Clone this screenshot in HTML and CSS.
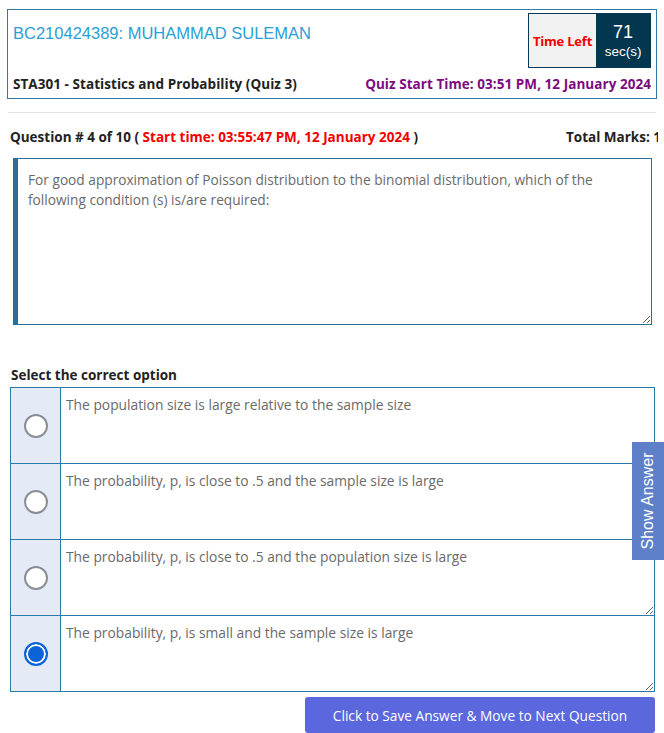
FILE: index.html
```html
<!DOCTYPE html>
<html>
<head>
<meta charset="utf-8">
<link rel="stylesheet" href="styles.css">
</head>
<body>
<div class="page">
  <div class="header">
    <div class="head-top">
      <div class="student">BC210424389: MUHAMMAD SULEMAN</div>
      <div class="timer">
        <div class="timer-label">Time Left</div>
        <div class="timer-value"><span class="secs">71</span><span class="unit">sec(s)</span></div>
      </div>
    </div>
    <div class="head-bottom">
      <div class="course">STA301 - Statistics and Probability (Quiz 3)</div>
      <div class="quiz-start">Quiz Start Time: 03:51 PM, 12 January 2024</div>
    </div>
  </div>
  <div class="rule"></div>
  <div class="qline">
    <div class="qnum">Question # 4 of 10 ( <span class="red">Start time: 03:55:47 PM, 12 January 2024</span> )</div>
    <div class="marks">Total Marks: 1</div>
  </div>
  <textarea class="question" readonly>For good approximation of Poisson distribution to the binomial distribution, which of the following condition (s) is/are required:</textarea>
  <div class="select-label">Select the correct option</div>
  <div class="options">
    <div class="opt">
      <div class="radio-cell"><span class="radio"></span></div>
      <textarea class="opt-text" readonly>The population size is large relative to the sample size</textarea>
    </div>
    <div class="opt">
      <div class="radio-cell"><span class="radio"></span></div>
      <textarea class="opt-text" readonly>The probability, p, is close to .5 and the sample size is large</textarea>
    </div>
    <div class="opt">
      <div class="radio-cell"><span class="radio"></span></div>
      <textarea class="opt-text" readonly>The probability, p, is close to .5 and the population size is large</textarea>
    </div>
    <div class="opt">
      <div class="radio-cell"><span class="radio checked"></span></div>
      <textarea class="opt-text" readonly>The probability, p, is small and the sample size is large</textarea>
    </div>
  </div>
  <div class="actions">
    <button class="save">Click to Save Answer &amp; Move to Next Question</button>
  </div>
</div>
<div class="show-answer"><span>Show Answer</span></div>
</body>
</html>
```
FILE: styles.css
```css
html, body {
  margin: 0;
  padding: 0;
  background: #fff;
  overflow: hidden;
}
body {
  font-family: "Open Sans", "Liberation Sans", sans-serif;
  width: 664px;
  height: 733px;
  position: relative;
}
.page {
  padding: 9px 7px 0 7px;
}
.header {
  border: 1px solid #2f79a3;
  height: 90px;
  box-sizing: border-box;
  padding: 3px 5px 0 5px;
  display: flex;
  flex-direction: column;
}
.head-top {
  display: flex;
  justify-content: space-between;
  align-items: flex-start;
}
.student {
  font-family: "Liberation Sans", Arial, sans-serif;
  color: #2aa0d6;
  font-size: 16.5px;
  margin-top: 11px;
}
.timer {
  display: flex;
  height: 55px;
  border: 1px solid #033a56;
  box-sizing: border-box;
}
.timer-label {
  width: 67px;
  background: #f2f2f2;
  color: #f20000;
  font-weight: 700;
  font-size: 13px;
  display: flex;
  align-items: center;
  justify-content: center;
  letter-spacing: -0.2px;
}
.timer-value {
  width: 54px;
  background: #02374f;
  color: #fff;
  display: flex;
  flex-direction: column;
  align-items: center;
  font-family: "Liberation Sans", Arial, sans-serif;
  padding-top: 7px;
  box-sizing: border-box;
}
.secs { font-size: 18px; line-height: 22px; }
.unit { font-size: 13.5px; line-height: 18px; }
.head-bottom {
  display: flex;
  justify-content: space-between;
  margin-top: 7px;
  font-size: 13.5px;
  font-weight: 700;
  letter-spacing: 0.05px;
  white-space: nowrap;
}
.course { color: #222; }
.quiz-start { color: #7d0a80; }
.rule {
  height: 1px;
  background: #e3e3e3;
  margin: 13px 1px 0 1px;
}
.qline {
  display: flex;
  justify-content: space-between;
  font-size: 13.5px;
  font-weight: 700;
  color: #222;
  margin-top: 15px;
  padding-left: 3px;
  white-space: nowrap;
  overflow: hidden;
  width: 648px;
}
.qline .marks { margin-right: -3px; }
.red { color: #f20000; }
.question {
  display: block;
  margin: 12px 0 0 6px;
  width: 639px;
  height: 167px;
  box-sizing: border-box;
  border: 1px solid #2a6f98;
  border-left: 5px solid #2a6f98;
  padding: 11px 10px;
  font-family: "Open Sans", sans-serif;
  font-size: 13.7px;
  line-height: 20px;
  color: #6a6a6a;
  resize: both;
  outline: none;
}
.select-label {
  font-size: 13.5px;
  font-weight: 700;
  color: #222;
  margin-top: 41px;
  padding-left: 4px;
}
.options {
  margin: 3px 2px 0 3px;
  border: 1px solid #2a79a8;
  border-bottom: none;
}
.opt {
  display: flex;
  height: 75px;
  border-bottom: 1px solid #2a79a8;
}
.radio-cell {
  width: 49px;
  background: #e5ebf6;
  border-right: 1px solid #2a79a8;
  display: flex;
  align-items: center;
  justify-content: center;
}
.radio {
  width: 20px;
  height: 20px;
  border: 2px solid #8c8c95;
  border-radius: 50%;
  background: #fff;
}
.radio.checked {
  border: 2px solid #0b63d8;
  background: #0b63d8;
  box-shadow: inset 0 0 0 2px #fff;
}
.opt-text {
  flex: 1;
  border: none;
  padding: 7px 5px;
  font-family: "Open Sans", sans-serif;
  font-size: 13.8px;
  line-height: 19px;
  color: #6a6a6a;
  resize: vertical;
  outline: none;
  height: 75px;
  box-sizing: border-box;
}
.actions {
  display: flex;
  justify-content: flex-end;
  margin: 5px 2px 0 0;
}
.save {
  width: 350px;
  height: 36px;
  background: #5b67dd;
  border: none;
  border-radius: 3px;
  color: #fff;
  font-family: "Open Sans", sans-serif;
  font-size: 13.7px;
}
.show-answer {
  position: absolute;
  left: 632px;
  top: 442px;
  width: 32px;
  height: 118px;
  background: #5e80c9;
  display: flex;
  align-items: center;
  justify-content: center;
}
.show-answer span {
  transform: rotate(-90deg);
  white-space: nowrap;
  color: #fff;
  font-family: "Liberation Sans", Arial, sans-serif;
  font-size: 16px;
}
```
